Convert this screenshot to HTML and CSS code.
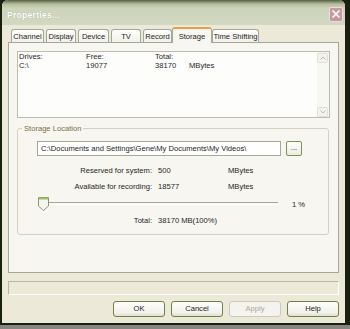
FILE: index.html
```html
<!DOCTYPE html>
<html lang="en">
  <head>
    <title>Properties</title>
    <meta charset="UTF-8" />
    <link rel="stylesheet" href="styles.css">
  </head>
  <body>
    <div class="screen">
      <div class="window">
        <div class="titlebar">
          <span class="title">Properties...</span>
          <span class="close">
            <svg width="10" height="10" viewBox="0 0 10 10"><path d="M1.5 1.5 L8.5 8.5 M8.5 1.5 L1.5 8.5" stroke="#fff" stroke-width="1.6" fill="none"/></svg>
          </span>
        </div>
        <div class="content">
          <div class="tabs">
            <div class="tab">Channel</div>
            <div class="tab">Display</div>
            <div class="tab">Device</div>
            <div class="tab">TV</div>
            <div class="tab">Record</div>
            <div class="tab active">Storage</div>
            <div class="tab">Time Shifting</div>
          </div>
          <div class="panel">
            <div class="drives">
              <div class="drive-table">
                <span>Drives:</span><span>Free:</span><span>Total:</span><span></span>
                <span>C:\</span><span>19077</span><span>38170</span><span>MBytes</span>
              </div>
              <div class="scroll">
                <span class="arrow">
                  <svg width="6" height="4" viewBox="0 0 6 4"><path d="M0.5 3.5 L3 1 L5.5 3.5" stroke="#b7bca8" fill="none"/></svg>
                </span>
                <span class="arrow">
                  <svg width="6" height="4" viewBox="0 0 6 4"><path d="M0.5 0.5 L3 3 L5.5 0.5" stroke="#b7bca8" fill="none"/></svg>
                </span>
              </div>
            </div>
            <fieldset class="group">
              <legend>Storage Location</legend>
              <div class="path-row">
                <div class="path-input">C:\Documents and Settings\Gene\My Documents\My Videos\</div>
                <div class="browse-btn">...</div>
              </div>
              <div class="info-grid">
                <span class="lbl">Reserved for system:</span><span>500</span><span>MBytes</span>
                <span class="lbl">Available for recording:</span><span>18577</span><span>MBytes</span>
              </div>
              <div class="slider-row">
                <div class="slider">
                  <svg class="thumb" width="11" height="14" viewBox="0 0 11 14">
                    <path d="M0.5 0.5 H10.5 V9 L5.5 13.5 L0.5 9 Z" fill="#f6f5ef" stroke="#8d9478"/>
                    <path d="M1 1.5 H10" stroke="#9cc45e" stroke-width="2"/>
                  </svg>
                  <div class="track"></div>
                </div>
                <span class="pct">1 %</span>
              </div>
              <div class="info-grid total">
                <span class="lbl">Total:</span><span>38170 MB(100%)</span>
              </div>
            </fieldset>
          </div>
          <div class="status"></div>
          <div class="buttons">
            <div class="btn">OK</div>
            <div class="btn">Cancel</div>
            <div class="btn disabled">Apply</div>
            <div class="btn">Help</div>
          </div>
        </div>
      </div>
    </div>
  </body>
</html>
```

FILE: styles.css
```css
body {
  margin: 0;
  background-color: #85867f;
  font-family: "Liberation Sans", Arial, sans-serif;
  font-size: 7.6px;
  color: #1e1e1e;
}

.screen {
  width: 350px;
  height: 325px;
  padding-left: 2px;
  box-sizing: border-box;
  background-color: #18200f;
}

.window {
  width: 343px;
  height: 323px;
  display: flex;
  flex-direction: column;
  background-color: #ece9d8;
  border-radius: 6px 6px 0 0;
}

.titlebar {
  height: 25px;
  flex: none;
  display: flex;
  align-items: center;
  justify-content: space-between;
  padding: 0 2px 0 5px;
  border-radius: 6px 6px 0 0;
  background: linear-gradient(#56603f 0, #b4bc9e 4px, #cdd4ba 8px, #d2d8c1 100%);
}

.title {
  padding-top: 4px;
  color: #fff;
  font-weight: bold;
  font-size: 8.5px;
  letter-spacing: 0.3px;
  text-shadow: 0 0 1px #98a284;
}

.close {
  width: 14px;
  height: 15px;
  margin-top: 3px;
  box-sizing: border-box;
  display: flex;
  align-items: center;
  justify-content: center;
  background-color: #c59aa0;
  border: 1px solid #eadcdc;
  border-radius: 2px;
}

.content {
  flex: 1;
  display: flex;
  flex-direction: column;
  padding: 2px 6px 0 6px;
}

.tabs {
  height: 15px;
  display: flex;
  align-items: flex-end;
  gap: 2px;
  padding-left: 3px;
}

.tab {
  height: 13px;
  box-sizing: border-box;
  display: flex;
  align-items: center;
  justify-content: center;
  border: 1px solid #a3a999;
  border-bottom: none;
  border-radius: 3px 3px 0 0;
  background: linear-gradient(#fefefd, #f1f0e8);
}

.tab:nth-child(1) { width: 33px; }
.tab:nth-child(2) { width: 30px; }
.tab:nth-child(3) { width: 31px; }
.tab:nth-child(4) { width: 30px; }
.tab:nth-child(5) { width: 29px; }
.tab:nth-child(7) { width: 47px; }

.tab.active {
  width: 40px;
  height: 16px;
  margin: 0 -2px -1px;
  position: relative;
  z-index: 1;
  border-top: 2px solid #e9a04a;
  background: #f7f6f1;
}

.panel {
  height: 231px;
  box-sizing: border-box;
  padding: 8px 8px 0 8px;
  border: 1px solid #a3a999;
  background-color: #f7f6f1;
}

.drives {
  height: 67px;
  box-sizing: border-box;
  display: flex;
  border: 1px solid #bdbdab;
  background-color: #fdfdfc;
}

.drive-table {
  flex: 1;
  display: grid;
  grid-template-columns: 67px 69px 34px auto;
  grid-auto-rows: 9px;
  align-content: start;
  line-height: 9px;
  padding-left: 1px;
}

.scroll {
  width: 11px;
  display: flex;
  flex-direction: column;
  justify-content: space-between;
  padding: 1px 1px 0 0;
  background-color: #f8f8f3;
}

.arrow {
  height: 10px;
  box-sizing: border-box;
  display: flex;
  align-items: center;
  justify-content: center;
  border: 1px solid #e0e1d6;
  border-radius: 2px;
  background-color: #f4f4ee;
}

.group {
  margin: 6px 1px 0 0;
  padding: 0 10px 5px 19px;
  border: 1px solid #d3d2c2;
  border-radius: 3px;
}

.group legend {
  margin-left: -15px;
  padding: 0 2px;
  color: #7a6c48;
  line-height: 9px;
}

.path-row {
  display: flex;
  gap: 5px;
  margin-top: 8px;
}

.path-input {
  width: 244px;
  height: 15px;
  box-sizing: border-box;
  padding-left: 3px;
  line-height: 13px;
  border: 1px solid #a5aa94;
  background-color: #fff;
}

.browse-btn {
  width: 16px;
  height: 15px;
  box-sizing: border-box;
  text-align: center;
  line-height: 11px;
  border: 1px solid #7d9150;
  border-radius: 2px;
  background: linear-gradient(#fefefe, #ecebe3);
}

.info-grid {
  display: grid;
  grid-template-columns: 115px 64px auto;
  column-gap: 6px;
  grid-auto-rows: 16px;
  line-height: 16px;
  margin-top: 7px;
}

.info-grid .lbl {
  text-align: right;
}

.info-grid.total {
  margin-top: 0;
}

.slider-row {
  height: 18px;
  display: flex;
  align-items: center;
}

.slider {
  width: 240px;
  display: flex;
  align-items: flex-start;
  margin-left: 1px;
}

.thumb {
  flex: none;
}

.track {
  flex: 1;
  height: 1px;
  margin-top: 5px;
  border-top: 1px solid #a8a79f;
  border-bottom: 1px solid #fff;
}

.pct {
  margin-left: 14px;
}

.status {
  height: 14px;
  margin-top: 8px;
  box-sizing: border-box;
  border: 1px solid #fff;
  border-top-color: #b8b6a6;
  border-left-color: #b8b6a6;
}

.buttons {
  display: flex;
  justify-content: flex-end;
  gap: 6px;
  margin-top: 6px;
}

.btn {
  width: 52px;
  height: 16px;
  box-sizing: border-box;
  text-align: center;
  line-height: 14px;
  border: 1px solid #6b8445;
  border-radius: 3px;
  background: linear-gradient(#fefefe, #f2f1ea 75%, #e2e0d3);
}

.btn.disabled {
  color: #aca899;
  border-color: #cbc9bb;
  background: #f4f3ee;
}
```
